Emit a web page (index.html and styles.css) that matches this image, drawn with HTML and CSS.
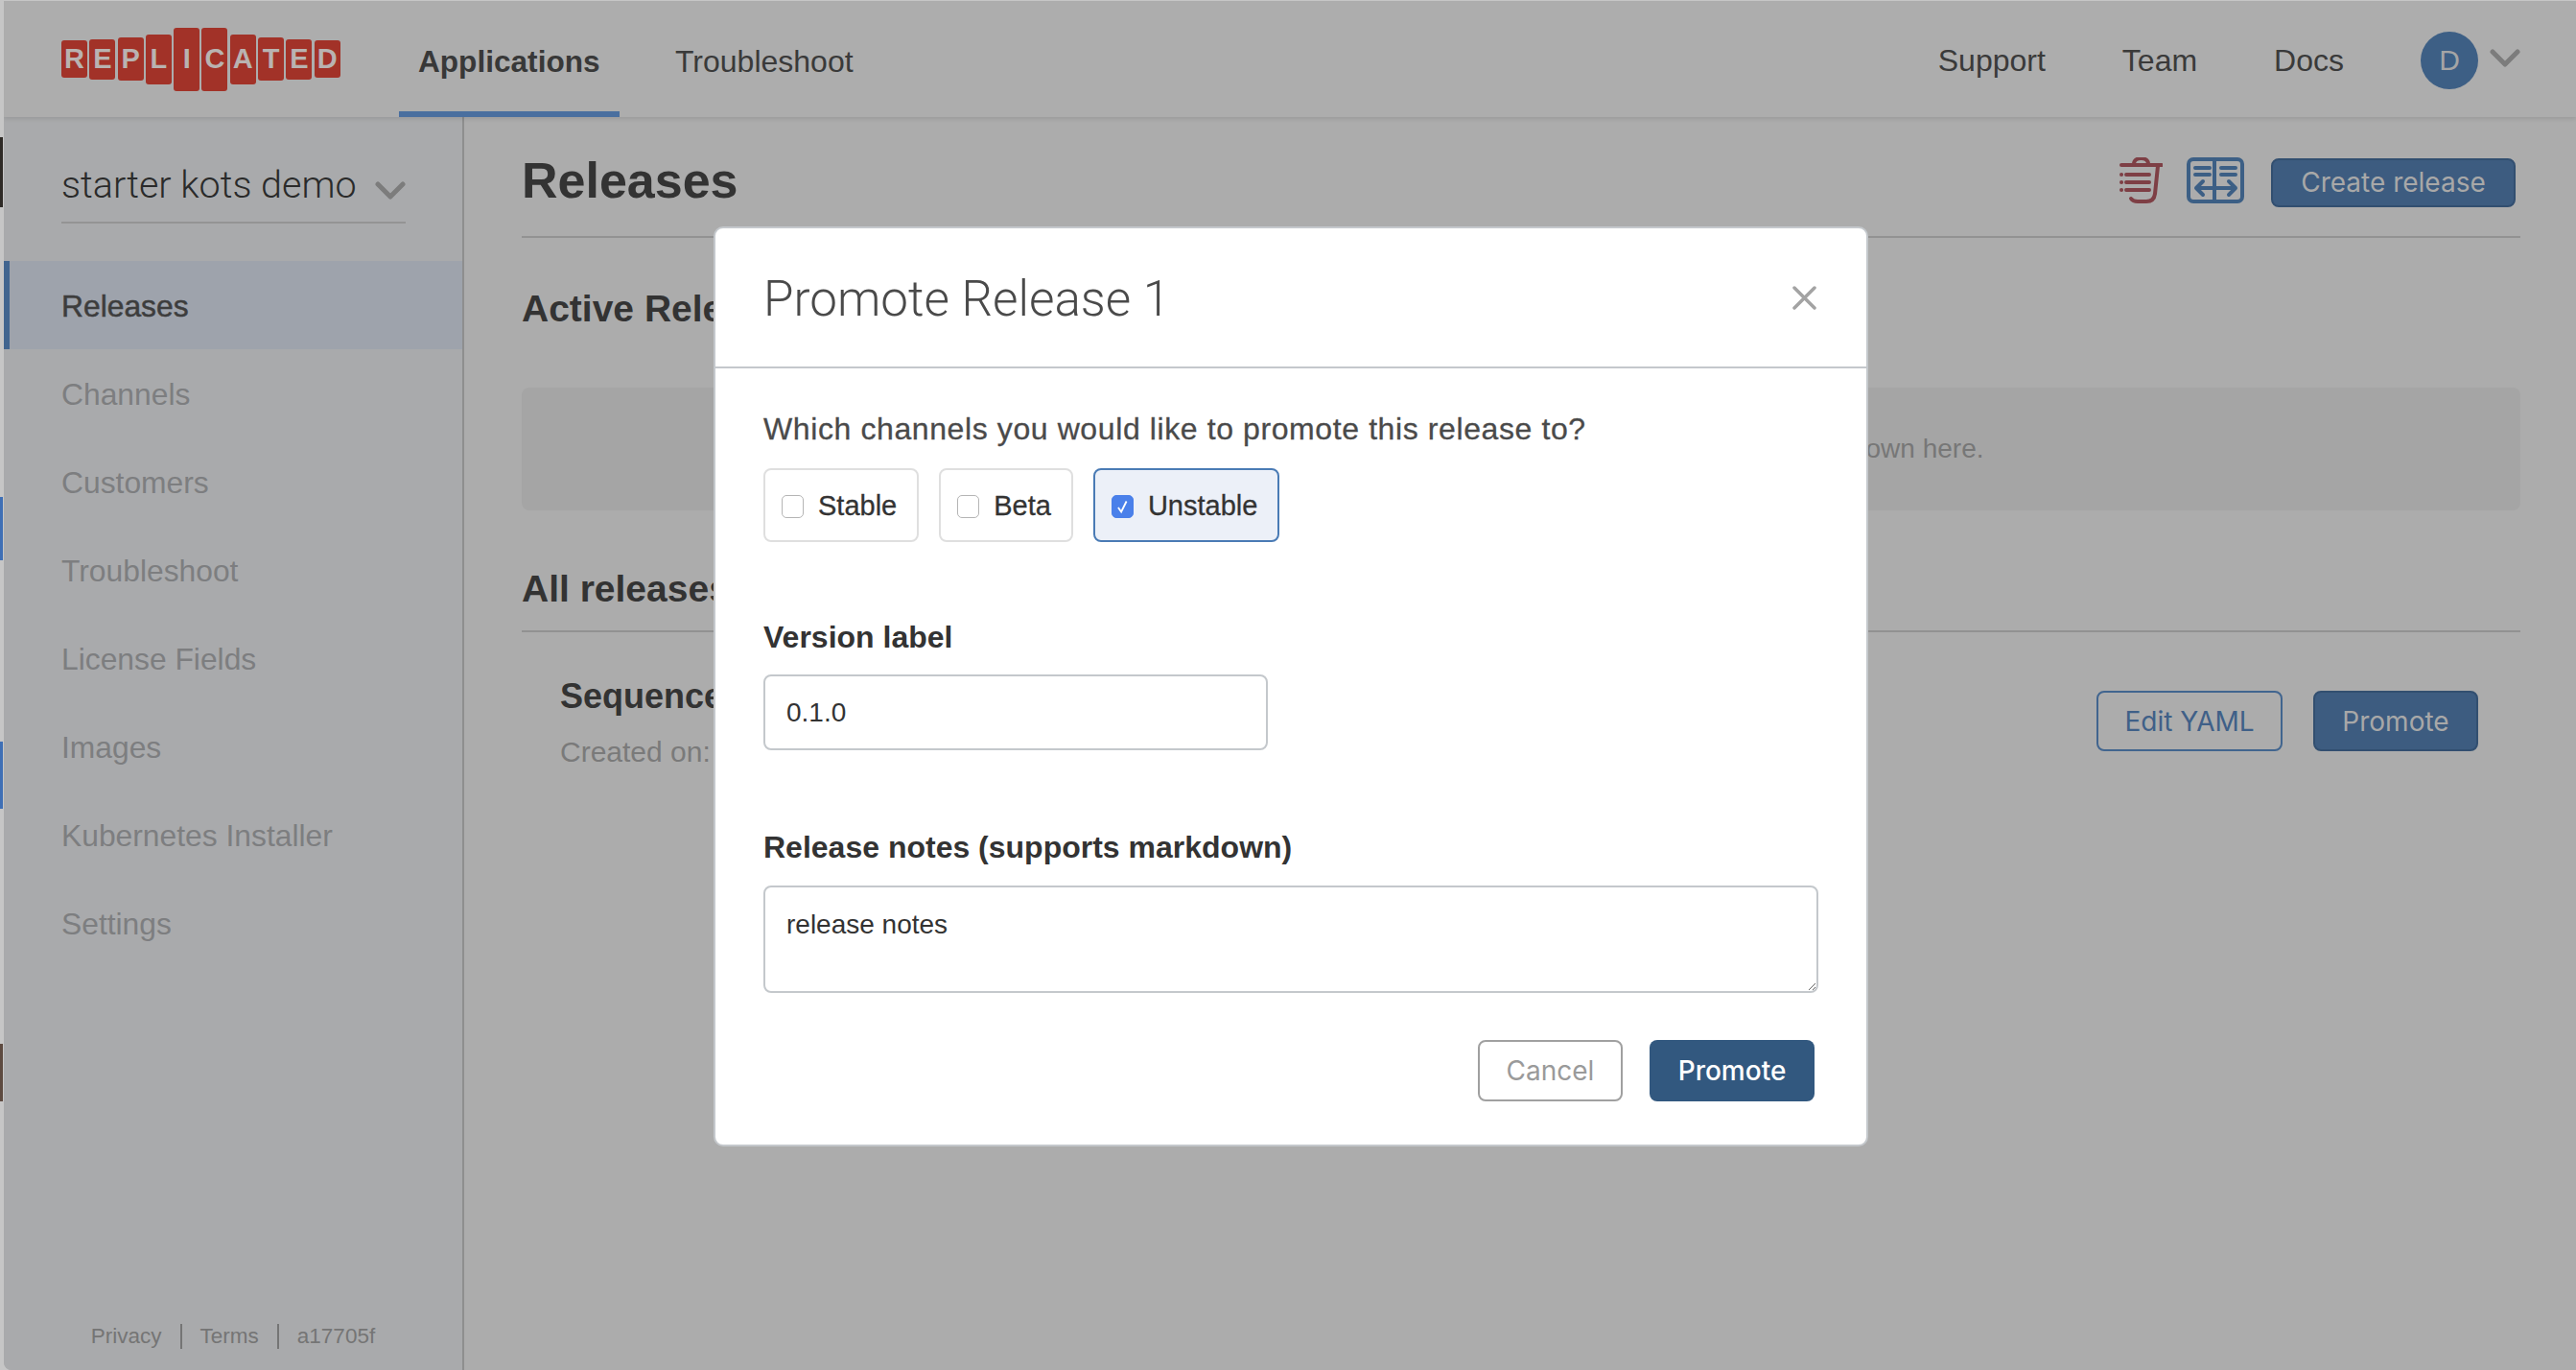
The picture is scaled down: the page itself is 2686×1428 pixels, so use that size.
FILE: index.html
```html
<!DOCTYPE html>
<html lang="en">
<head>
    <meta charset="UTF-8">
    <title>Releases</title>
    <link rel="stylesheet" href="styles.css">
</head>
<body>

<div class="desk"></div>

<div class="app">
    <header class="topbar">
        <div class="logo">
            <span class="tile t1">R</span>
            <span class="tile t2">E</span>
            <span class="tile t3">P</span>
            <span class="tile t4">L</span>
            <span class="tile t5">I</span>
            <span class="tile t5">C</span>
            <span class="tile t4">A</span>
            <span class="tile t3">T</span>
            <span class="tile t2">E</span>
            <span class="tile t1">D</span>
        </div>
        <nav class="tabs">
            <a class="tab active">Applications</a>
            <a class="tab">Troubleshoot</a>
        </nav>
        <nav class="usernav">
            <a>Support</a>
            <a>Team</a>
            <a>Docs</a>
            <span class="avatar">D</span>
            <svg class="chev" viewBox="0 0 32 19"><path d="M3 3l13 13L29 3"/></svg>
        </nav>
    </header>

    <div class="columns">
        <aside class="sidebar">
            <div class="app-select">
                <span>starter kots demo</span>
                <svg class="chev" viewBox="0 0 32 19"><path d="M3 3l13 13L29 3"/></svg>
            </div>
            <ul class="side-nav">
                <li class="active">Releases</li>
                <li>Channels</li>
                <li>Customers</li>
                <li>Troubleshoot</li>
                <li>License Fields</li>
                <li>Images</li>
                <li>Kubernetes Installer</li>
                <li>Settings</li>
            </ul>
            <footer class="side-foot">
                <span>Privacy</span>
                <span>Terms</span>
                <span>a17705f</span>
            </footer>
        </aside>

        <main class="content">
            <div class="page-head">
                <h1>Releases</h1>
                <svg class="icon-trash" viewBox="0 0 45 48">
                    <path d="M2 8h42"/>
                    <path d="M15 7c0-8 15-8 15 0"/>
                    <path d="M7 18h24M7 26h24M7 34h24"/>
                    <path d="M2 18h.1M2 26h.1M2 34h.1"/>
                    <path d="M40 9l-3 29q-1 8-9 8H19q-5 0-7-3"/>
                </svg>
                <svg class="icon-compare" viewBox="0 0 60 48">
                    <rect x="2" y="2" width="56" height="44" rx="5"/>
                    <path d="M29 2v44"/>
                    <path d="M9 11h15M9 18h15M36 11h15M36 18h15"/>
                    <path d="M10 32h41M17 25l-7 7 7 7M44 25l7 7-7 7"/>
                </svg>
                <button class="btn btn-create">Create release</button>
            </div>

            <h2 class="active-title">Active Releases</h2>
            <div class="empty-box">Releases that have been promoted to a channel by a user will be shown here.</div>

            <h2 class="all-title">All releases</h2>
            <div class="release-row">
                <div class="release-info">
                    <h3>Sequence 1</h3>
                    <p>Created on:</p>
                </div>
                <div class="release-actions">
                    <button class="btn btn-outline">Edit YAML</button>
                    <button class="btn btn-promote">Promote</button>
                </div>
            </div>
        </main>
    </div>
</div>

<div class="modal-wrap">
    <div class="modal">
        <div class="modal-head">
            <h2>Promote Release 1</h2>
            <svg class="close" viewBox="0 0 25 25"><path d="M2 2l21 21M23 2L2 23"/></svg>
        </div>
        <div class="modal-body">
            <p class="question">Which channels you would like to promote this release to?</p>
            <div class="channels">
                <label class="channel"><span class="box"></span>Stable</label>
                <label class="channel"><span class="box"></span>Beta</label>
                <label class="channel selected">
                    <span class="box">
                        <svg viewBox="0 0 23 24"><path d="M6.5 13l3.5 5 6-12"/></svg>
                    </span>Unstable
                </label>
            </div>

            <label class="field-label label-version" for="version">Version label</label>
            <input class="field version" id="version" type="text" value="0.1.0">

            <label class="field-label label-notes" for="notes">Release notes (supports markdown)</label>
            <textarea class="field notes" id="notes">release notes</textarea>

            <div class="modal-actions">
                <button class="btn btn-cancel">Cancel</button>
                <button class="btn btn-confirm">Promote</button>
            </div>
        </div>
    </div>
</div>

</body>
</html>
```

FILE: styles.css
```css
* {
    box-sizing: border-box;
}

body {
    font-family: "Liberation Sans", Arial, sans-serif;
    display: flex;
    height: 100vh;
    margin: 0;
    overflow: hidden;
    background-color: #c6c6c6;
}

h1, h2, h3, p, ul {
    margin: 0;
    padding: 0;
}

.desk {
    flex: 0 0 4px;
    background: linear-gradient(to right, #2e2a26 3px, #c6c6c6 3px) 0 143px / 4px 73px no-repeat,
        linear-gradient(to right, #3f6fb5 3px, #c6c6c6 3px) 0 518px / 4px 66px no-repeat,
        linear-gradient(to right, #3f6fb5 3px, #c6c6c6 3px) 0 773px / 4px 70px no-repeat,
        linear-gradient(to right, #5d4a40 3px, #c6c6c6 3px) 0 1088px / 4px 60px no-repeat;
}

.app {
    flex: 1;
    display: flex;
    flex-direction: column;
    min-width: 0;
    border-top: 1px solid #c6c6c6;
    background-color: #acacac;
    border-bottom-left-radius: 8px;
    overflow: hidden;
}

/* top bar */
.topbar {
    display: flex;
    flex: 0 0 121px;
    align-items: stretch;
    padding: 0 58px 0 60px;
    background-color: #adadad;
    box-shadow: 0 2px 4px rgba(0, 0, 0, 0.1);
    position: relative;
}

.logo {
    display: flex;
    align-items: center;
    gap: 2.3px;
    width: 292px;
    margin-right: 60px;
}

.tile {
    display: flex;
    width: 27px;
    align-items: center;
    justify-content: center;
    background-color: #a23228;
    border-radius: 3px;
    color: #b9b3b1;
    font-size: 29px;
    font-weight: bold;
}

.t1 { height: 39px; }
.t2 { height: 42px; }
.t3 { height: 45px; }
.t4 { height: 52px; }
.t5 { height: 66px; }

.tabs {
    display: flex;
    gap: 38px;
}

.tab {
    display: flex;
    align-items: center;
    padding: 11px 20px 0;
    border-bottom: 6px solid transparent;
    color: #3a3a3a;
    font-size: 32px;
}

.tab.active {
    width: 230px;
    border-bottom-color: #4a6f9f;
    color: #383838;
    font-size: 31.6px;
    font-weight: bold;
}

.usernav {
    display: flex;
    align-items: center;
    gap: 80px;
    margin-left: auto;
    padding-top: 3px;
    color: #3a3a3a;
    font-size: 32px;
}

.avatar {
    display: flex;
    width: 60px;
    height: 60px;
    align-items: center;
    justify-content: center;
    background-color: #3d5f85;
    border-radius: 50%;
    color: #a5a5a5;
    font-size: 30px;
}

.chev {
    width: 32px;
    height: 19px;
    fill: none;
    stroke: #7c7c7c;
    stroke-width: 5;
    stroke-linecap: round;
    stroke-linejoin: round;
}

.usernav .chev {
    margin: -6px 0 0 -68px;
}

/* columns */
.columns {
    display: flex;
    flex: 1;
    min-height: 0;
}

.sidebar {
    display: flex;
    flex: 0 0 480px;
    flex-direction: column;
    background-color: #a9aaac;
    border-right: 2px solid #8e8e8e;
}

.app-select {
    display: flex;
    height: 71px;
    align-items: center;
    justify-content: space-between;
    margin: 40px 59px 0 60px;
    padding-bottom: 8px;
    border-bottom: 2px solid #949494;
    color: #2a2a2a;
    font-family: Roboto, sans-serif;
    font-size: 39.5px;
    font-weight: 300;
}

.app-select .chev {
    margin-top: 12px;
}

.side-nav {
    margin-top: 39px;
    list-style: none;
}

.side-nav li {
    display: flex;
    height: 92px;
    align-items: center;
    padding: 2px 0 0 54px;
    border-left: 6px solid transparent;
    color: #7d7e80;
    font-size: 31.8px;
}

.side-nav li.active {
    background-color: #9ea3ac;
    border-left-color: #41658f;
    color: #3d3d3d;
    -webkit-text-stroke: 0.5px #3d3d3d;
}

.side-foot {
    display: flex;
    align-items: center;
    justify-content: center;
    margin-top: auto;
    padding: 0 0 22px 0;
    color: #757575;
    font-size: 22.5px;
}

.side-foot span + span {
    margin-left: 19px;
    padding-left: 19px;
    border-left: 2px solid #757575;
}

/* main content */
.content {
    flex: 1;
    min-width: 0;
    padding: 0 58px 0 60px;
}

.page-head {
    display: flex;
    height: 126px;
    align-items: center;
    padding: 8px 5px 0 0;
    border-bottom: 2px solid #929292;
}

.page-head h1 {
    margin-right: auto;
    color: #333;
    font-size: 52px;
}

.icon-trash {
    width: 45px;
    height: 48px;
    margin-right: 25px;
    fill: none;
    stroke: #7e3f45;
    stroke-width: 4;
    stroke-linecap: round;
}

.icon-compare {
    width: 60px;
    height: 48px;
    margin-right: 28px;
    fill: none;
    stroke: #3c5f85;
    stroke-width: 4;
    stroke-linecap: round;
    stroke-linejoin: round;
}

.btn {
    font-family: Inter, sans-serif;
    font-size: 28px;
    border-radius: 8px;
    cursor: pointer;
}

.btn-create {
    width: 255px;
    height: 51px;
    margin-top: 4px;
    background-color: #3d5c80;
    border: 2px solid #324f70;
    color: #a8a8a8;
}

.active-title, .all-title {
    color: #333;
    font-size: 39px;
    line-height: 48px;
}

.active-title {
    margin-top: 50px;
}

.empty-box {
    height: 128px;
    margin-top: 58px;
    padding-top: 46px;
    background-color: #a5a5a5;
    border-radius: 8px;
    color: #777;
    font-size: 28px;
    line-height: 36px;
    text-align: center;
}

.all-title {
    margin-top: 58px;
    padding-bottom: 19px;
    border-bottom: 2px solid #929292;
}

.release-row {
    display: flex;
    justify-content: space-between;
    padding: 0 44px 0 40px;
}

.release-info h3 {
    margin-top: 45px;
    color: #333;
    font-size: 36px;
    line-height: 44px;
}

.release-info p {
    margin-top: 18px;
    color: #7a7a7a;
    font-size: 30px;
    line-height: 36px;
}

.release-actions {
    display: flex;
    gap: 32px;
    margin-top: 61px;
}

.btn-outline {
    width: 194px;
    height: 63px;
    background: none;
    border: 2px solid #41658f;
    color: #3f6088;
}

.btn-promote {
    width: 172px;
    height: 63px;
    background-color: #3d5c80;
    border: 2px solid #324f70;
    color: #a8a8a8;
}

/* modal */
.modal-wrap {
    position: fixed;
    top: 0;
    right: 0;
    bottom: 0;
    left: 0;
    display: flex;
    align-items: center;
    justify-content: center;
    padding: 3px 0 0 6px;
}

.modal {
    width: 1204px;
    height: 959px;
    background-color: #fff;
    border: 2px solid #c4c8cc;
    border-radius: 10px;
}

.modal-head {
    display: flex;
    height: 146px;
    align-items: center;
    justify-content: space-between;
    padding: 3px 52px 0 50px;
    border-bottom: 2px solid #c4c8cc;
}

.modal-head h2 {
    color: #4a4a4a;
    font-family: Roboto, sans-serif;
    font-size: 51.2px;
    font-weight: 300;
}

.close {
    width: 25px;
    height: 25px;
    margin-top: -2px;
    fill: none;
    stroke: #a3a3a3;
    stroke-width: 3.5;
    stroke-linecap: round;
}

.modal-body {
    padding: 43px 50px 0 50px;
}

.question {
    color: #4a4a4a;
    font-size: 32px;
    line-height: 40px;
    letter-spacing: 0.6px;
    -webkit-text-stroke: 0.3px #4a4a4a;
}

.channels {
    display: flex;
    gap: 21px;
    margin-top: 21px;
}

.channel {
    display: flex;
    height: 77px;
    align-items: center;
    padding: 2px 21px 0 17px;
    background-color: #fff;
    border: 2px solid #dfdfdf;
    border-radius: 8px;
    color: #333;
    font-size: 29px;
    -webkit-text-stroke: 0.3px #333;
}

.channel.selected {
    background-color: #ecf0f8;
    border-color: #4a7bb5;
}

.box {
    display: block;
    width: 23px;
    height: 24px;
    margin-right: 15px;
    background-color: #fff;
    border: 1px solid #b5b5b5;
    border-radius: 5px;
}

.selected .box {
    background-color: #4a80ea;
    border-color: #4a80ea;
}

.box svg {
    display: block;
    width: 21px;
    height: 22px;
    fill: none;
    stroke: #fff;
    stroke-width: 2;
}

.field-label {
    display: block;
    color: #333;
    font-size: 32px;
    font-weight: bold;
    line-height: 40px;
}

.label-version {
    margin: 79px 0 19px;
}

.label-notes {
    margin: 81px 0 20px;
}

.field {
    display: block;
    padding: 0 22px;
    background-color: #fff;
    border: 2px solid #c4c8cc;
    border-radius: 8px;
    color: #333;
    font-family: "Liberation Sans", Arial, sans-serif;
    font-size: 28px;
}

.version {
    width: 526px;
    height: 79px;
}

.notes {
    width: 100%;
    height: 112px;
    padding-top: 22px;
    line-height: 34px;
}

.modal-actions {
    display: flex;
    gap: 28px;
    justify-content: flex-end;
    margin-top: 49px;
    padding-right: 4px;
}

.btn-cancel {
    width: 151px;
    height: 64px;
    background-color: #fff;
    border: 2px solid #a0a0a0;
    color: #9a9a9a;
}

.btn-confirm {
    width: 172px;
    height: 64px;
    background-color: #32587f;
    border: none;
    color: #fff;
    font-weight: 500;
}
```
